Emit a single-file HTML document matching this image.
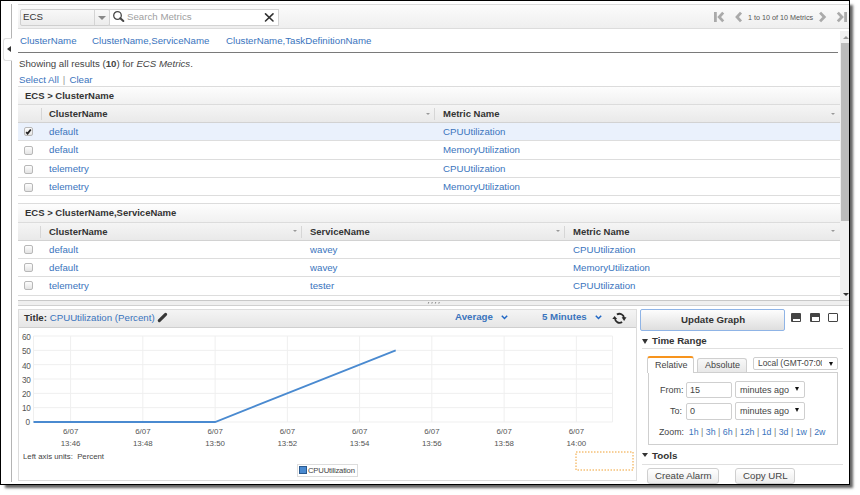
<!DOCTYPE html>
<html><head><meta charset="utf-8">
<style>
*{box-sizing:border-box;margin:0;padding:0}
html,body{width:860px;height:495px;overflow:hidden;background:#fff}
body{position:relative;font-family:"Liberation Sans",sans-serif;color:#444;font-size:9.7px}
.a{position:absolute;white-space:nowrap}
.t{position:absolute;white-space:nowrap;line-height:10px}
.lnk{color:#3a74bd}
.b{font-weight:bold}
.hl{position:absolute;height:1px;background:#ddd}
.vl{position:absolute;width:1px;background:#ddd}
#frame{position:absolute;left:0;top:0;width:850px;height:485px;border:1px solid #000;box-shadow:4px 4px 2.5px -1px rgba(0,0,0,.62)}
.cb{position:absolute;width:9px;height:9px;border:1px solid #b8b8b8;border-radius:2px;background:linear-gradient(#fdfdfd,#e4e4e4)}
.sarr{position:absolute;width:0;height:0;border-left:2.5px solid transparent;border-right:2.5px solid transparent;border-top:2.6px solid #999;margin:-0.4px 0 0 0.6px}
.hdr{position:absolute;background:linear-gradient(#f5f5f5,#e9e9e9)}
.sec{position:absolute;background:linear-gradient(#fdfdfd,#f1f1f1)}
</style></head><body>
<div id="frame"></div>
<div id="c" style="position:absolute;left:0;top:0;width:849px;height:484px;overflow:hidden">

<!-- left gutter -->
<div class="vl" style="left:11px;top:4px;height:34px;background:#b4b4b4"></div>
<div class="vl" style="left:11px;top:60px;height:422px;background:#b4b4b4"></div>
<div class="a" style="left:3px;top:38px;width:9px;height:23px;border:1px solid #e0e0e0;border-right:none;border-radius:3px 0 0 3px;background:#fff"></div>
<div class="a" style="left:6.8px;top:45.6px;width:0;height:0;border-top:3.7px solid transparent;border-bottom:3.7px solid transparent;border-right:4.3px solid #333"></div>

<!-- toolbar -->
<div class="a" style="left:18px;top:4px;width:831px;height:25px;border-top:1px solid #dcdcdc;border-bottom:1px solid #dcdcdc;background:linear-gradient(#fbfbfb,#efefef)"></div>
<div class="a" style="left:20px;top:9px;width:90px;height:17px;border:1px solid #cfcfcf;border-radius:2px;background:linear-gradient(#f8f8f8,#ececec)"></div>
<div class="vl" style="left:94px;top:10px;height:15px;background:#d4d4d4"></div>
<div class="t" style="left:23px;top:12px;color:#333">ECS</div>
<div class="a" style="left:98px;top:16px;width:0;height:0;border-left:4px solid transparent;border-right:4px solid transparent;border-top:4px solid #888"></div>
<div class="a" style="left:109px;top:9px;width:170px;height:17px;border:1px solid #d4d4d4;background:#fff"></div>
<svg class="a" style="left:112px;top:10px" width="14" height="13" viewBox="0 0 14 13"><circle cx="5.5" cy="5.5" r="3.8" fill="none" stroke="#484848" stroke-width="1.3"/><line x1="8.3" y1="8.3" x2="11.3" y2="11" stroke="#484848" stroke-width="2.1" stroke-linecap="round"/></svg>
<div class="t" style="left:127px;top:12px;color:#a0a0a0">Search Metrics</div>
<svg class="a" style="left:264px;top:12px" width="11" height="11" viewBox="0 0 11 11"><path d="M1.5 1.8L9 9M9 1.8L1.5 9" stroke="#333" stroke-width="1.6" stroke-linecap="round"/></svg>

<!-- pagination -->
<svg class="a" style="left:712px;top:11px" width="140" height="12" viewBox="0 0 140 12">
 <g stroke="#aaa" stroke-width="2.8" fill="none">
  <line x1="3.4" y1="1" x2="3.4" y2="11"/>
  <path d="M11.2 1.6L7.2 6L11.2 10.4"/>
  <path d="M29 1.6L25 6L29 10.4"/>
  <path d="M108.1 1.6L112.3 6L108.1 10.4"/>
  <path d="M125.8 1.6L130 6L125.8 10.4"/>
  <line x1="133.6" y1="1" x2="133.6" y2="11"/>
 </g>
</svg>
<div class="t" style="left:748px;top:12.5px;font-size:7.2px;color:#555">1 to 10 of 10 Metrics</div>

<!-- scrollbar -->
<div class="a" style="left:840px;top:31px;width:9px;height:269px;background:#f0f0f0"></div>
<div class="a" style="left:841px;top:43px;width:8px;height:178px;background:#bcbcbc"></div>
<div class="a" style="left:842.5px;top:35.5px;width:0;height:0;border-left:3px solid transparent;border-right:3px solid transparent;border-bottom:3.5px solid #999"></div>
<div class="a" style="left:842.5px;top:292.5px;width:0;height:0;border-left:3px solid transparent;border-right:3px solid transparent;border-top:3.5px solid #333"></div>

<!-- tabs -->
<div class="t lnk" style="left:20px;top:36px">ClusterName</div>
<div class="t lnk" style="left:92px;top:36px">ClusterName,ServiceName</div>
<div class="t lnk" style="left:226px;top:36px">ClusterName,TaskDefinitionName</div>
<div class="hl" style="left:18px;top:52px;width:820px;background:#7a7a7a"></div>

<div class="t" style="left:19px;top:59px">Showing all results (<b>10</b>) for <i>ECS Metrics</i>.</div>
<div class="t" style="left:19px;top:75px"><span class="lnk">Select All</span><span style="color:#999;margin:0 4px 0 4px">|</span><span class="lnk">Clear</span></div>

<!-- section 1 -->
<div class="sec" style="left:18px;top:86px;width:822px;height:19px;border-top:1px solid #dcdcdc;border-bottom:1px solid #dcdcdc"></div>
<div class="t b" style="left:25px;top:91px;color:#333;font-size:9.5px">ECS &gt; ClusterName</div>
<div class="hdr" style="left:18px;top:105px;width:822px;height:18px;border-bottom:1px solid #d2d2d2"></div>
<div class="vl" style="left:41px;top:108px;height:12px;background:#d6d6d6"></div>
<div class="vl" style="left:434px;top:108px;height:12px;background:#d6d6d6"></div>
<div class="t b" style="left:49px;top:109px;color:#333;font-size:9.5px">ClusterName</div>
<div class="t b" style="left:443px;top:109px;color:#333;font-size:9.5px">Metric Name</div>
<div class="sarr" style="left:425px;top:113px"></div>
<div class="sarr" style="left:830px;top:113px"></div>

<div class="a" style="left:18px;top:123px;width:822px;height:17px;background:#eaf1fc"></div>
<div class="hl" style="left:18px;top:140px;width:822px"></div>
<div class="hl" style="left:18px;top:159px;width:822px"></div>
<div class="hl" style="left:18px;top:177px;width:822px"></div>
<div class="hl" style="left:18px;top:195px;width:822px"></div>

<div class="cb" style="left:24px;top:127px"></div>
<svg class="a" style="left:25px;top:128px" width="8" height="8" viewBox="0 0 8 8"><path d="M1.2 4.2L2.6 5.6L5.8 1.5" stroke="#222" stroke-width="1.8" fill="none"/></svg>
<div class="cb" style="left:24px;top:146px"></div>
<div class="cb" style="left:24px;top:164.5px"></div>
<div class="cb" style="left:24px;top:182.5px"></div>

<div class="t lnk" style="left:49px;top:127px">default</div>
<div class="t lnk" style="left:49px;top:145px">default</div>
<div class="t lnk" style="left:49px;top:163.7px">telemetry</div>
<div class="t lnk" style="left:49px;top:181.7px">telemetry</div>
<div class="t lnk" style="left:443px;top:127px">CPUUtilization</div>
<div class="t lnk" style="left:443px;top:145px">MemoryUtilization</div>
<div class="t lnk" style="left:443px;top:163.7px">CPUUtilization</div>
<div class="t lnk" style="left:443px;top:181.7px">MemoryUtilization</div>

<!-- section 2 -->
<div class="sec" style="left:18px;top:203px;width:822px;height:20px;border-top:1px solid #dcdcdc;border-bottom:1px solid #dcdcdc"></div>
<div class="t b" style="left:25px;top:208px;color:#333;font-size:9.5px">ECS &gt; ClusterName,ServiceName</div>
<div class="hdr" style="left:18px;top:223px;width:822px;height:18px;border-bottom:1px solid #d2d2d2"></div>
<div class="vl" style="left:40px;top:226px;height:12px;background:#d6d6d6"></div>
<div class="vl" style="left:301px;top:226px;height:12px;background:#d6d6d6"></div>
<div class="vl" style="left:564px;top:226px;height:12px;background:#d6d6d6"></div>
<div class="t b" style="left:49px;top:227px;color:#333;font-size:9.5px">ClusterName</div>
<div class="t b" style="left:310px;top:227px;color:#333;font-size:9.5px">ServiceName</div>
<div class="t b" style="left:573px;top:227px;color:#333;font-size:9.5px">Metric Name</div>
<div class="sarr" style="left:292px;top:230px"></div>
<div class="sarr" style="left:555px;top:230px"></div>
<div class="sarr" style="left:830px;top:230px"></div>

<div class="hl" style="left:18px;top:258px;width:822px"></div>
<div class="hl" style="left:18px;top:276px;width:822px"></div>
<div class="hl" style="left:18px;top:295px;width:822px"></div>
<div class="cb" style="left:24px;top:245px"></div>
<div class="cb" style="left:24px;top:263px"></div>
<div class="cb" style="left:24px;top:281px"></div>
<div class="t lnk" style="left:49px;top:245px">default</div>
<div class="t lnk" style="left:49px;top:263px">default</div>
<div class="t lnk" style="left:49px;top:281px">telemetry</div>
<div class="t lnk" style="left:310px;top:245px">wavey</div>
<div class="t lnk" style="left:310px;top:263px">wavey</div>
<div class="t lnk" style="left:310px;top:281px">tester</div>
<div class="t lnk" style="left:573px;top:245px">CPUUtilization</div>
<div class="t lnk" style="left:573px;top:263px">MemoryUtilization</div>
<div class="t lnk" style="left:573px;top:281px">CPUUtilization</div>

<!-- splitter -->
<div class="a" style="left:18px;top:300px;width:831px;height:6px;border-top:1px solid #c8c8c8;border-bottom:1px solid #d0d0d0;background:#efefef"></div>
<svg class="a" style="left:426px;top:300px" width="18" height="5" viewBox="0 0 18 5"><g stroke="#8a8a8a" stroke-width="1"><path d="M2.8 2L2.3 3.6M6.3 2L5.8 3.6M9.8 2L9.3 3.6M13.3 2L12.8 3.6"/></g></svg>

<!-- graph panel -->
<div class="a" style="left:18px;top:309px;width:619px;height:172px;border:1px solid #dcdcdc;background:#fff"></div>
<div class="a" style="left:19px;top:310px;width:617px;height:18px;border-bottom:1px solid #cfcfcf;background:linear-gradient(#f4f4f4,#e6e6e6)"></div>
<div class="t" style="left:24px;top:313px;color:#333"><b>Title:</b> <span class="lnk">CPUUtilization (Percent)</span></div>
<svg class="a" style="left:152px;top:308px" width="20" height="18" viewBox="0 0 20 18"><path d="M7.3 12.6L13.6 6.3" stroke="#383838" stroke-width="3.1" stroke-linecap="round"/></svg>
<div class="t b lnk" style="left:455px;top:312px">Average</div>
<svg class="a" style="left:501px;top:315px" width="7" height="5" viewBox="0 0 7 5"><path d="M0.8 0.8L3.5 3.5L6.2 0.8" stroke="#1f66c4" stroke-width="1.5" fill="none"/></svg>
<div class="t b lnk" style="left:542px;top:312px">5 Minutes</div>
<svg class="a" style="left:595px;top:315px" width="7" height="5" viewBox="0 0 7 5"><path d="M0.8 0.8L3.5 3.5L6.2 0.8" stroke="#1f66c4" stroke-width="1.5" fill="none"/></svg>
<svg class="a" style="left:610px;top:309.5px" width="18" height="16" viewBox="0 0 18 16"><path d="M6.9 4.6A4.5 4.5 0 0 1 14 8.1" stroke="#2a2a2a" stroke-width="1.8" fill="none"/><path d="M12.1 12A4.5 4.5 0 0 1 5 8.5" stroke="#2a2a2a" stroke-width="1.8" fill="none"/><path d="M11.6 7.2L16.5 7.2L14.1 10.9Z" fill="#2a2a2a"/><path d="M2.3 9.1L7.2 9.1L4.6 5.9Z" fill="#2a2a2a"/></svg>

<!-- chart -->
<svg class="a" style="left:0;top:0" width="640" height="485" viewBox="0 0 640 485">
 <g stroke="#efefef" stroke-width="1">
  <line x1="33.5" y1="336" x2="612.5" y2="336"/>
  <line x1="33.5" y1="350.33" x2="612.5" y2="350.33"/>
  <line x1="33.5" y1="364.67" x2="612.5" y2="364.67"/>
  <line x1="33.5" y1="379" x2="612.5" y2="379"/>
  <line x1="33.5" y1="393.33" x2="612.5" y2="393.33"/>
  <line x1="33.5" y1="407.67" x2="612.5" y2="407.67"/>
  <line x1="33.5" y1="336" x2="33.5" y2="422"/>
  <line x1="70.6" y1="336" x2="70.6" y2="422"/>
  <line x1="142.85" y1="336" x2="142.85" y2="422"/>
  <line x1="215.1" y1="336" x2="215.1" y2="422"/>
  <line x1="287.35" y1="336" x2="287.35" y2="422"/>
  <line x1="359.6" y1="336" x2="359.6" y2="422"/>
  <line x1="431.85" y1="336" x2="431.85" y2="422"/>
  <line x1="504.1" y1="336" x2="504.1" y2="422"/>
  <line x1="576.35" y1="336" x2="576.35" y2="422"/>
  <line x1="612.5" y1="336" x2="612.5" y2="422"/>
  <line x1="33.5" y1="422" x2="612.5" y2="422"/>
 </g>
 <polyline points="33.5,422 215.1,422 395.7,350.3" fill="none" stroke="#4a8ad0" stroke-width="1.8"/>
 <rect x="576" y="452" width="57" height="18" fill="none" stroke="#f0a030" stroke-width="1" stroke-dasharray="1.5,1.5"/>
</svg>
<div class="t" style="left:22px;top:332.9px;font-size:8.2px;color:#555;letter-spacing:-0.2px">60</div>
<div class="t" style="left:22px;top:347.1px;font-size:8.2px;color:#555;letter-spacing:-0.2px">50</div>
<div class="t" style="left:22px;top:361.6px;font-size:8.2px;color:#555;letter-spacing:-0.2px">40</div>
<div class="t" style="left:22px;top:375.6px;font-size:8.2px;color:#555;letter-spacing:-0.2px">30</div>
<div class="t" style="left:22px;top:389.8px;font-size:8.2px;color:#555;letter-spacing:-0.2px">20</div>
<div class="t" style="left:22px;top:404.0px;font-size:8.2px;color:#555;letter-spacing:-0.2px">10</div>
<div class="t" style="left:25.5px;top:418.2px;font-size:8.2px;color:#555;letter-spacing:-0.2px">0</div>

<div class="a" style="left:0;top:426px;width:640px;font-size:7.9px;color:#555;line-height:12.2px">
 <div class="a" style="left:50.60px;width:40px;text-align:center">6/07<br>13:46</div>
 <div class="a" style="left:122.85px;width:40px;text-align:center">6/07<br>13:48</div>
 <div class="a" style="left:195.10px;width:40px;text-align:center">6/07<br>13:50</div>
 <div class="a" style="left:267.35px;width:40px;text-align:center">6/07<br>13:52</div>
 <div class="a" style="left:339.60px;width:40px;text-align:center">6/07<br>13:54</div>
 <div class="a" style="left:411.85px;width:40px;text-align:center">6/07<br>13:56</div>
 <div class="a" style="left:484.10px;width:40px;text-align:center">6/07<br>13:58</div>
 <div class="a" style="left:556.35px;width:40px;text-align:center">6/07<br>14:00</div>
</div>
<div class="t" style="left:23px;top:452px;font-size:7.8px;color:#444">Left axis units:&nbsp; Percent</div>
<div class="a" style="left:297px;top:464px;width:61px;height:13px;border:1px solid #ddd;background:#fff"></div>
<div class="a" style="left:299px;top:466px;width:8px;height:8px;border:1px solid #2a5a90;background:#4a8ad0"></div>
<div class="t" style="left:308px;top:465.5px;font-size:7.7px;color:#444;letter-spacing:-0.2px">CPUUtilization</div>

<!-- right panel -->
<div class="a" style="left:640px;top:309px;width:145px;height:21.6px;border:1px solid #8fb4e6;border-radius:2px;background:linear-gradient(#fdfdfd,#dedede)"></div>
<div class="t b" style="left:681px;top:314.6px;color:#333">Update Graph</div>

<div class="a" style="left:791px;top:313px;width:10px;height:9px;background:#444;border-radius:1px"></div>
<div class="a" style="left:793px;top:319.2px;width:7px;height:1.4px;background:#fff"></div>
<div class="a" style="left:810px;top:313px;width:10px;height:9px;background:#444;border-radius:1px"></div>
<div class="a" style="left:811.5px;top:317px;width:7px;height:3.5px;background:#fff"></div>
<div class="a" style="left:828px;top:313px;width:10px;height:9px;border:1.5px solid #444;background:#fff;border-radius:1px"></div>

<div class="a" style="left:641.8px;top:338.5px;width:0;height:0;border-left:3.8px solid transparent;border-right:3.8px solid transparent;border-top:5px solid #333"></div>
<div class="t b" style="left:652px;top:336px;color:#333;font-size:9.7px">Time Range</div>
<div class="hl" style="left:642px;top:348px;width:201px;background:#e0e0e0"></div>

<div class="a" style="left:648px;top:372px;width:190px;height:73px;border:1px solid #cfcfcf"></div>
<div class="a" style="left:647px;top:356px;width:47px;height:17px;border:1px solid #cfcfcf;border-top:2px solid #f7941d;border-bottom:none;border-radius:3px 3px 0 0;background:#fff"></div>
<div class="t" style="left:655px;top:359.5px;font-size:9px;color:#444">Relative</div>
<div class="a" style="left:697px;top:358px;width:50px;height:14px;border:1px solid #cfcfcf;border-bottom:none;border-radius:3px 3px 0 0;background:linear-gradient(#f8f8f8,#e8e8e8)"></div>
<div class="t" style="left:705px;top:360px;font-size:9px;color:#444">Absolute</div>
<div class="a" style="left:753px;top:357px;width:85px;height:13px;border:1px solid #cfcfcf;border-radius:2px;background:#fff;overflow:hidden"><div class="t" style="left:4px;top:1.5px;font-size:8.4px;color:#444;top:0">Local (GMT-07:00)</div><div class="a" style="left:68px;top:0;width:14px;height:11px;background:#fff"></div></div>
<div class="a" style="left:829px;top:362px;width:0;height:0;border-left:2.5px solid transparent;border-right:2.5px solid transparent;border-top:4px solid #111"></div>

<div class="t" style="left:660px;top:385px;font-size:9px;color:#444">From:</div>
<div class="a" style="left:686px;top:382px;width:46px;height:16px;border:1px solid #cfcfcf;border-radius:2px;background:#fff"></div>
<div class="t" style="left:690px;top:385px;font-size:9px;color:#444">15</div>
<div class="a" style="left:735px;top:381px;width:70px;height:17px;border:1px solid #cfcfcf;border-radius:2px;background:#fff"></div>
<div class="t" style="left:740px;top:385px;font-size:9px;color:#444">minutes ago</div>
<div class="a" style="left:794.8px;top:386.5px;width:0;height:0;border-left:2.7px solid transparent;border-right:2.7px solid transparent;border-top:4.6px solid #111"></div>

<div class="t" style="left:670px;top:406px;font-size:9px;color:#444">To:</div>
<div class="a" style="left:686px;top:403px;width:46px;height:17px;border:1px solid #cfcfcf;border-radius:2px;background:#fff"></div>
<div class="t" style="left:690px;top:406px;font-size:9px;color:#444">0</div>
<div class="a" style="left:735px;top:402px;width:70px;height:18px;border:1px solid #cfcfcf;border-radius:2px;background:#fff"></div>
<div class="t" style="left:740px;top:406px;font-size:9px;color:#444">minutes ago</div>
<div class="a" style="left:794.8px;top:408px;width:0;height:0;border-left:2.7px solid transparent;border-right:2.7px solid transparent;border-top:4.6px solid #111"></div>

<div class="t" style="left:659px;top:426.5px;font-size:8.8px;color:#444">Zoom:&nbsp; <span class="lnk">1h</span> <span style="color:#777">|</span> <span class="lnk">3h</span> <span style="color:#777">|</span> <span class="lnk">6h</span> <span style="color:#777">|</span> <span class="lnk">12h</span> <span style="color:#777">|</span> <span class="lnk">1d</span> <span style="color:#777">|</span> <span class="lnk">3d</span> <span style="color:#777">|</span> <span class="lnk">1w</span> <span style="color:#777">|</span> <span class="lnk">2w</span></div>

<div class="a" style="left:641.8px;top:453px;width:0;height:0;border-left:3.8px solid transparent;border-right:3.8px solid transparent;border-top:4.6px solid #333"></div>
<div class="t b" style="left:652px;top:451px;color:#333;font-size:9.8px">Tools</div>
<div class="hl" style="left:642px;top:464px;width:201px;background:#e0e0e0"></div>
<div class="a" style="left:647px;top:468px;width:72px;height:16px;border:1px solid #cfcfcf;border-radius:3px;background:linear-gradient(#fff,#ececec)"></div>
<div class="t" style="left:655px;top:471px;color:#444">Create Alarm</div>
<div class="a" style="left:735px;top:468px;width:60px;height:16px;border:1px solid #cfcfcf;border-radius:3px;background:linear-gradient(#fff,#ececec)"></div>
<div class="t" style="left:743px;top:471px;color:#444">Copy URL</div>

</div>
<!-- re-draw frame border on top -->
<div class="a" style="left:0;top:0;width:850px;height:485px;border:1px solid #000"></div>
</body></html>
